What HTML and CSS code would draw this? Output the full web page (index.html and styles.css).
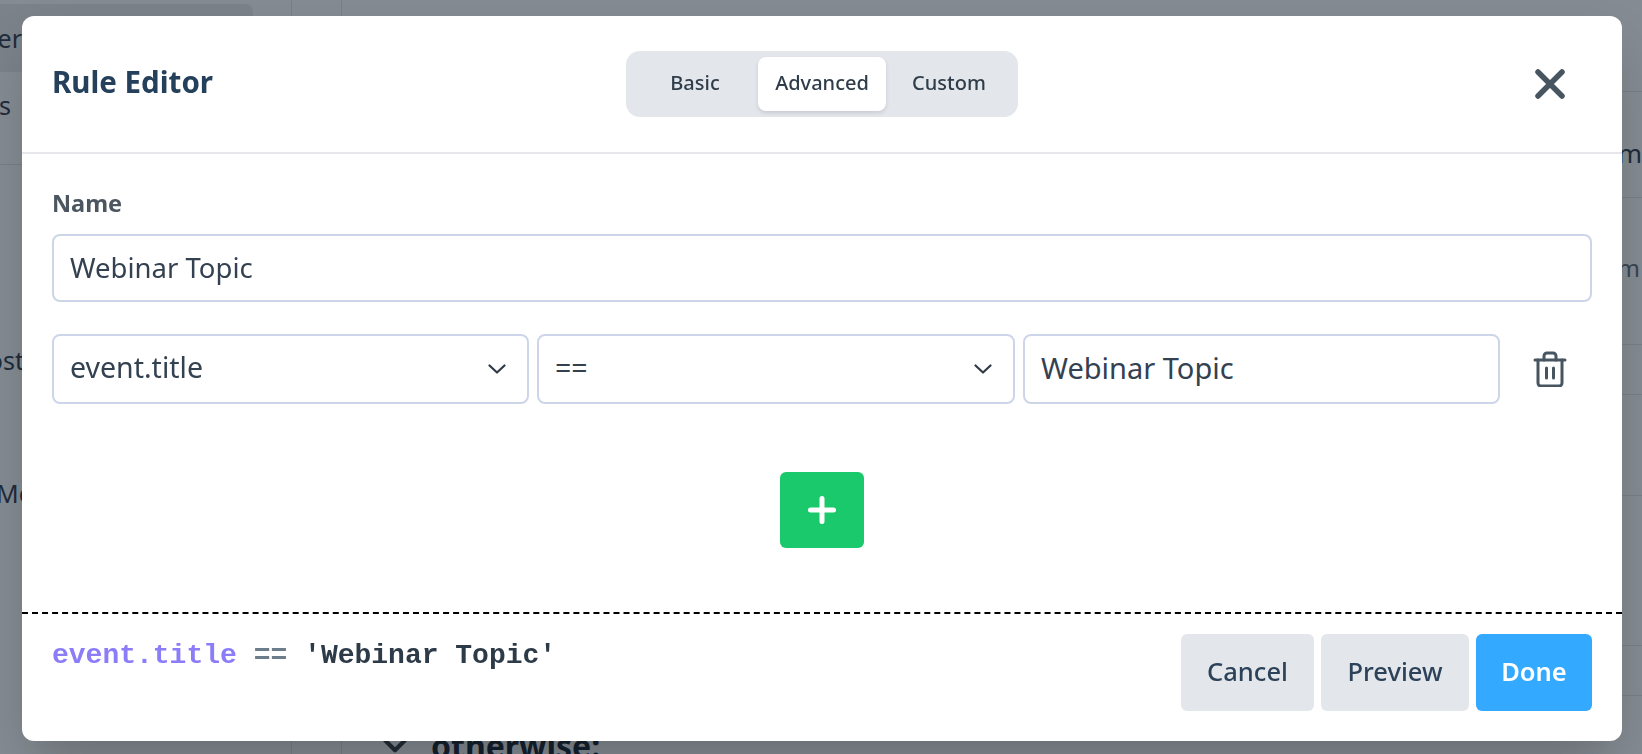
FILE: index.html
```html
<!DOCTYPE html>
<html lang="en">
<head>
<meta charset="utf-8">
<title>Rule Editor</title>
<link rel="stylesheet" href="styles.css">
</head>
<body>
<div class="app">
  <aside class="sidebar">
    <div class="nav-item nav-active"><span class="nav-label">Center</span></div>
    <div class="nav-item nav-second"><span class="nav-label">Rules</span></div>
    <div class="nav-item nav-third"><span class="nav-label">Post</span></div>
    <div class="nav-item nav-fourth"><span class="nav-label">Members</span></div>
  </aside>
  <div class="rail"></div>
  <main class="main">
    <div class="row row-a"></div>
    <div class="row row-b"><span class="row-text">Custom</span></div>
    <div class="row row-c"><span class="row-text row-muted">Team</span></div>
    <div class="row row-d"></div>
    <div class="row row-e"></div>
    <div class="row row-f"></div>
    <div class="row row-g"></div>
    <div class="otherwise">
      <svg class="otherwise-icon" viewBox="0 0 24 24" fill="none" stroke="#3b4148" stroke-width="3" stroke-linecap="round" stroke-linejoin="round"><path d="M5 8l7 7 7-7"/></svg>
      <span>otherwise:</span>
    </div>
  </main>
</div>

<div class="overlay">
  <section class="modal">
    <header class="modal-head">
      <h1 class="modal-title">Rule Editor</h1>
      <div class="tabs">
        <div class="tab">Basic</div>
        <div class="tab tab-active">Advanced</div>
        <div class="tab">Custom</div>
      </div>
      <svg class="close-icon" viewBox="0 0 30 30" fill="none" stroke="#475560" stroke-width="5.500" stroke-linecap="round"><path d="M3 3l24 24M27 3L3 27"/></svg>
    </header>

    <div class="modal-body">
      <div class="field-label">Name</div>
      <div class="control control-name">Webinar Topic</div>

      <div class="rule-row">
        <div class="control control-select">
          <span>event.title</span>
          <svg class="chevron" viewBox="0 0 18 10" fill="none" stroke="#2f3a45" stroke-width="2.2" stroke-linecap="round" stroke-linejoin="round"><path d="M1.5 1.5L9 8.5l7.5-7"/></svg>
        </div>
        <div class="control control-select">
          <span>==</span>
          <svg class="chevron" viewBox="0 0 18 10" fill="none" stroke="#2f3a45" stroke-width="2.2" stroke-linecap="round" stroke-linejoin="round"><path d="M1.5 1.5L9 8.5l7.5-7"/></svg>
        </div>
        <div class="control control-value">Webinar Topic</div>
        <div class="trash-cell">
          <svg class="trash-icon" viewBox="0 0 34 36" fill="none" stroke="#475560" stroke-width="3" stroke-linecap="round" stroke-linejoin="round"><path d="M2 9h30"/><path d="M5 9v23a3 3 0 0 0 3 3h18a3 3 0 0 0 3-3V9"/><path d="M11 9V5a3 3 0 0 1 3-3h6a3 3 0 0 1 3 3v4"/><path d="M13.500 17v10M20.500 17v10"/></svg>
        </div>
      </div>

      <div class="add-row">
        <div class="add-button">
          <svg class="plus-icon" viewBox="0 0 28 28" fill="none" stroke="#fff" stroke-width="5" stroke-linecap="round"><path d="M14 2.500v23M2.500 14h23"/></svg>
        </div>
      </div>
    </div>

    <footer class="modal-foot">
      <code class="expr"><span class="expr-var">event.title</span> <span class="expr-op">==</span> <span class="expr-str">'Webinar Topic'</span></code>
      <div class="actions">
        <div class="btn btn-cancel">Cancel</div>
        <div class="btn btn-preview">Preview</div>
        <div class="btn btn-done">Done</div>
      </div>
    </footer>
  </section>
</div>
</body>
</html>
```

FILE: styles.css
```css
* { box-sizing: border-box; }

html, body {
  margin: 0;
  height: 100%;
  overflow: hidden;
}

body {
  font-family: "Noto Sans", Lato, sans-serif;
  color: #334155;
  background: #fff;
}

/* Dimmed page behind the dialog */
.app {
  display: flex;
  height: 754px;
  color: #374151;
}

.sidebar {
  width: 292px;
  padding: 4px 38px 0 0;
  border-right: 1px solid #e5e7eb;
  flex: none;
}

.nav-item {
  display: flex;
  justify-content: flex-end;
  overflow: hidden;
  width: 253px;
  font-size: 25px;
}

.nav-label {
  white-space: nowrap;
}

.nav-active {
  height: 68px;
  align-items: center;
  background: #ededed;
  border-radius: 0 8px 8px 0;
}

.nav-active .nav-label { margin-right: 231px; }

.nav-second {
  height: 93px;
  padding-top: 16px;
  width: 254px;
  border-bottom: 1px solid #e5e7eb;
}

.nav-second .nav-label { margin-right: 243px; }

.nav-third { height: 230px; padding-top: 178px; }
.nav-third .nav-label { margin-right: 229px; }

.nav-fourth { height: 60px; margin-top: 81px; }
.nav-fourth .nav-label { margin-right: 145px; }

.rail {
  width: 50px;
  flex: none;
  border-right: 1px solid #e5e7eb;
}

.main {
  flex: 1;
  display: flex;
  flex-direction: column;
  padding-left: 36px;
  min-width: 0;
}

.row {
  display: flex;
  justify-content: flex-end;
  align-items: center;
  flex: none;
  margin-left: -36px;
  border-bottom: 1px solid #e5e7eb;
  overflow: hidden;
  font-size: 26px;
}

.row-text {
  white-space: nowrap;
}

.row-muted {
  padding-bottom: 8px;
  font-size: 24px;
  color: #6b7280;
  margin-right: 2px;
}

.row-a { height: 92px; }
.row-b { height: 106px; padding-top: 16px; }
.row-c { height: 147px; }
.row-d { height: 50px; }
.row-e { height: 101px; }
.row-f { height: 150px; }
.row-g { height: 50px; }

.otherwise {
  display: flex;
  align-items: center;
  flex: none;
  gap: 19px;
  margin-top: 28px;
  font-size: 32px;
  font-weight: 700;
  color: #1f2937;
}

.otherwise-icon {
  width: 34px;
  height: 34px;
  flex: none;
}

/* Overlay */
.overlay {
  position: fixed;
  inset: 0;
  padding: 16px 20px 13px 22px;
  background: rgba(10, 24, 38, 0.5);
}

.modal {
  display: flex;
  flex-direction: column;
  height: 725px;
  background: #fff;
  border-radius: 12px;
  box-shadow: 0 25px 50px -12px rgba(0, 0, 0, 0.25);
  overflow: hidden;
}

.modal-head {
  display: grid;
  grid-template-columns: 574px 392px 1fr;
  align-items: center;
  height: 138px;
  padding: 0 57px 0 30px;
  border-bottom: 2px solid #e5e7eb;
  flex: none;
}

.modal-title {
  margin: 0 0 5px;
  font-size: 29.500px;
  font-weight: 700;
  color: #24405a;
}

.tabs {
  display: grid;
  grid-template-columns: 126px 128px 126px;
  height: 66px;
  padding: 6px;
  background: #e3e6eb;
  border-radius: 14px;
}

.tab {
  display: flex;
  align-items: center;
  justify-content: center;
  padding-bottom: 3px;
  font-size: 20px;
  font-weight: 500;
  color: #2f3d4a;
  border-radius: 8px;
}

.tab-active {
  background: #fff;
  box-shadow: 0 2px 4px rgba(0, 0, 0, 0.12);
}

.close-icon {
  justify-self: end;
  width: 30px;
  height: 30px;
}

.modal-body {
  flex: 1;
  padding: 36px 30px 0;
  border-bottom: 2px dashed #000;
  min-height: 0;
}

.field-label {
  height: 28px;
  margin-bottom: 16px;
  line-height: 26px;
  font-size: 23.500px;
  font-weight: 700;
  color: #4b5661;
}

.control {
  display: flex;
  align-items: center;
  padding: 0 17px 2px 16px;
  background: #fff;
  border: 2px solid #cdd6e8;
  border-radius: 8px;
  font-size: 27.500px;
  color: #334150;
}

.control-name {
  height: 68px;
}

.rule-row {
  display: grid;
  grid-template-columns: 477px 478px 477px 1fr;
  column-gap: 8px;
  height: 70px;
  margin-top: 32px;
}

.control-select {
  justify-content: space-between;
  padding-bottom: 4px;
  font-size: 28.500px;
}

.control-value {
  padding-bottom: 4px;
  font-size: 29px;
}

.chevron {
  width: 18px;
  height: 10px;
  margin: 4px 4px 0 0;
}

.trash-cell {
  display: flex;
  align-items: center;
  justify-content: flex-end;
  padding-right: 25px;
}

.trash-icon {
  width: 34px;
  height: 36px;
}

.add-row {
  display: flex;
  justify-content: center;
  margin: 68px 0 0;
}

.add-button {
  display: flex;
  align-items: center;
  justify-content: center;
  width: 84px;
  height: 76px;
  background: #19c96b;
  border-radius: 6px;
}

.plus-icon {
  width: 28px;
  height: 28px;
}

.modal-foot {
  display: flex;
  justify-content: space-between;
  align-items: flex-start;
  height: 127px;
  padding: 20px 30px 0;
  flex: none;
}

.expr {
  margin-top: 5px;
  font-family: "Liberation Mono", monospace;
  font-size: 28px;
  line-height: 34px;
  font-weight: 700;
  white-space: pre;
}

.expr-var { color: #8b7cf8; }
.expr-op { color: #6b7c8a; }
.expr-str { color: #2d3b48; }

.actions {
  display: flex;
  gap: 7px;
}

.btn {
  display: flex;
  align-items: center;
  justify-content: center;
  height: 77px;
  padding-bottom: 4px;
  border-radius: 6px;
  font-size: 25.500px;
  font-weight: 500;
  color: #2c4258;
  background: #e3e6eb;
}

.btn-cancel { width: 133px; }
.btn-preview { width: 148px; }
.btn-done { width: 116px; background: #33a9ff; color: #fff; font-weight: 600; }
```
